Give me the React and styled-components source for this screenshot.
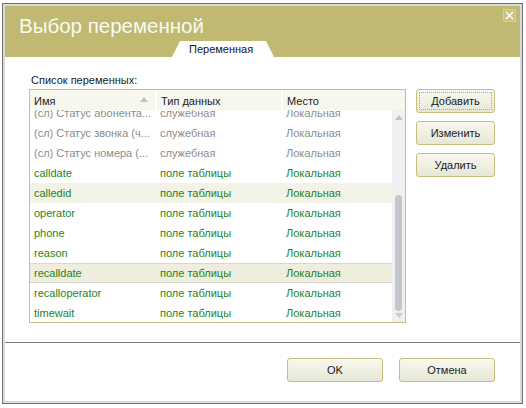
import React from "react";
import styled, { createGlobalStyle } from "styled-components";

const GlobalStyle = createGlobalStyle`
  body {
    margin: 0;
    background: #ffffff;
    font-family: "Liberation Sans", Arial, sans-serif;
  }
`;

const Window = styled.div`
  margin: 3px 0 0 2px;
  width: 521px;
  height: 401px;
  box-sizing: border-box;
  border: 1px solid #6f6f6f;
  display: flex;
`;

const Inner = styled.div`
  flex: 1;
  border: 2px solid #dadada;
  display: flex;
  flex-direction: column;
  background: #ffffff;
`;

const Header = styled.div`
  background: #bfb972;
  padding: 3px 4px 0 14px;
  display: flex;
  flex-direction: column;
`;

const TitleRow = styled.div`
  display: flex;
  justify-content: space-between;
  align-items: flex-start;
`;

const Title = styled.h1`
  margin: 5px 0 0;
  font-size: 20.5px;
  line-height: 24px;
  font-weight: 400;
  color: #fafaf0;
`;

const CloseButton = styled.div`
  width: 13px;
  height: 13px;
  box-sizing: border-box;
  border: 1px solid #d6d19c;
  background: #c9c384;
  display: flex;
  align-items: center;
  justify-content: center;
`;

const Tabs = styled.div`
  margin-top: 3px;
  padding-left: 153px;
  display: flex;
`;

const Tab = styled.div`
  width: 102px;
  height: 16px;
  background: #ffffff;
  clip-path: polygon(8px 0, 94px 0, 100% 100%, 0 100%);
  font-size: 11px;
  line-height: 17px;
  color: #1a1420;
  padding-left: 17px;
  box-sizing: border-box;
`;

const Content = styled.div`
  flex: 1;
  padding: 16px 0 0 24px;
  display: flex;
  flex-direction: column;
`;

const Label = styled.div`
  font-size: 11px;
  line-height: 14px;
  color: #1a1a1a;
  margin: 0 0 2px 2px;
`;

const Main = styled.div`
  display: flex;
  gap: 10px;
  align-items: flex-start;
`;

const Table = styled.div`
  width: 377px;
  height: 234px;
  box-sizing: border-box;
  border: 1px solid #c8c07e;
  display: flex;
  flex-direction: column;
`;

const HeadRow = styled.div`
  height: 20px;
  display: grid;
  grid-template-columns: 125px 124px 1fr;
  column-gap: 2px;
  background: #ffffff;
`;

const HeadCell = styled.div`
  background: #f8f7ee;
  font-size: 11px;
  line-height: 17px;
  padding: 3px 7px 0 4px;
  color: #1c1a26;
  display: flex;
  justify-content: space-between;
`;

const SortArrow = styled.span`
  margin-top: 4px;
  width: 0;
  height: 0;
  border-left: 4px solid transparent;
  border-right: 4px solid transparent;
  border-bottom: 5px solid #bdbdbd;
`;

const Body = styled.div`
  flex: 1;
  display: flex;
  min-height: 0;
`;

const Rows = styled.div`
  flex: 1;
  overflow: hidden;
`;

const RowList = styled.div`
  margin-top: -7px;
`;

const Row = styled.div`
  height: 20px;
  display: grid;
  grid-template-columns: 126px 126px 1fr;
  font-size: 11px;
  line-height: 20px;
  color: ${(p) => (p.$service ? "#8c8c8c" : "#1c841c")};
  background: ${(p) =>
    p.$selected ? "#efeede" : p.$hover ? "#f3f2e6" : "transparent"};
  box-shadow: ${(p) =>
    p.$selected ? "inset 0 1px 0 #d8d8d0, inset 0 -1px 0 #d8d8d0" : "none"};
`;

const Cell = styled.div`
  padding-left: 4px;
  white-space: nowrap;
  overflow: hidden;
`;

const Scrollbar = styled.div`
  width: 13px;
  background: #f0f0f3;
  display: flex;
  flex-direction: column;
  align-items: center;
  padding: 5px 0 4px;
  box-sizing: border-box;
`;

const ArrowUp = styled.span`
  width: 0;
  height: 0;
  border-left: 4px solid transparent;
  border-right: 4px solid transparent;
  border-bottom: 5px solid #c2c2c6;
`;

const ArrowDown = styled.span`
  margin-top: 2px;
  width: 0;
  height: 0;
  border-left: 4px solid transparent;
  border-right: 4px solid transparent;
  border-top: 5px solid #c8c8cc;
`;

const Track = styled.div`
  flex: 1;
`;

const Thumb = styled.div`
  width: 7px;
  border-radius: 4px;
  background: #c4c6cd;
`;

const SideButtons = styled.div`
  display: flex;
  flex-direction: column;
  gap: 8px;
`;

const Button = styled.button`
  position: relative;
  width: ${(p) => p.$width || 79}px;
  height: 24px;
  box-sizing: border-box;
  border: 1px solid #c6be7e;
  border-radius: 3px;
  background: linear-gradient(#f8f8f1, #e7e7d6);
  font-family: "Liberation Sans", Arial, sans-serif;
  font-size: 11px;
  font-weight: 400;
  color: #1a1a1a;
  padding: 0;
  cursor: default;

  &::after {
    content: "";
    display: ${(p) => (p.$focused ? "block" : "none")};
    position: absolute;
    inset: 2px;
    border: 1px dotted #b3ab72;
  }
`;

const Separator = styled.div`
  height: 1px;
  background: #7c7c7c;
`;

const Footer = styled.div`
  height: 58px;
  box-sizing: border-box;
  padding: 15px 25px 0 0;
  display: flex;
  justify-content: flex-end;
  gap: 16px;
`;

const rows = [
  { name: "(сл) Статус абонента...", type: "служебная", service: true },
  { name: "(сл) Статус звонка (ч...", type: "служебная", service: true },
  { name: "(сл) Статус номера (...", type: "служебная", service: true },
  { name: "calldate", type: "поле таблицы" },
  { name: "calledid", type: "поле таблицы", hover: true },
  { name: "operator", type: "поле таблицы" },
  { name: "phone", type: "поле таблицы" },
  { name: "reason", type: "поле таблицы" },
  { name: "recalldate", type: "поле таблицы", selected: true },
  { name: "recalloperator", type: "поле таблицы" },
  { name: "timewait", type: "поле таблицы" },
];

export default function App() {
  return (
    <>
      <GlobalStyle />
      <Window>
        <Inner>
          <Header>
            <TitleRow>
              <Title>Выбор переменной</Title>
              <CloseButton>
                <svg width="9" height="9" viewBox="0 0 9 9">
                  <path
                    d="M1 1 L8 8 M8 1 L1 8"
                    stroke="#ffffff"
                    strokeWidth="1.4"
                  />
                </svg>
              </CloseButton>
            </TitleRow>
            <Tabs>
              <Tab>Переменная</Tab>
            </Tabs>
          </Header>

          <Content>
            <Label>Список переменных:</Label>
            <Main>
              <Table>
                <HeadRow>
                  <HeadCell>
                    Имя
                    <SortArrow />
                  </HeadCell>
                  <HeadCell>Тип данных</HeadCell>
                  <HeadCell>Место</HeadCell>
                </HeadRow>
                <Body>
                  <Rows>
                    <RowList>
                      {rows.map((r) => (
                        <Row
                          key={r.name}
                          $service={r.service}
                          $hover={r.hover}
                          $selected={r.selected}
                        >
                          <Cell>{r.name}</Cell>
                          <Cell>{r.type}</Cell>
                          <Cell>Локальная</Cell>
                        </Row>
                      ))}
                    </RowList>
                  </Rows>
                  <Scrollbar>
                    <ArrowUp />
                    <Track />
                    <Thumb style={{ height: 116 }} />
                    <ArrowDown />
                  </Scrollbar>
                </Body>
              </Table>
              <SideButtons>
                <Button $focused>Добавить</Button>
                <Button>Изменить</Button>
                <Button>Удалить</Button>
              </SideButtons>
            </Main>
          </Content>

          <Separator />
          <Footer>
            <Button $width={96}>OK</Button>
            <Button $width={96}>Отмена</Button>
          </Footer>
        </Inner>
      </Window>
    </>
  );
}
